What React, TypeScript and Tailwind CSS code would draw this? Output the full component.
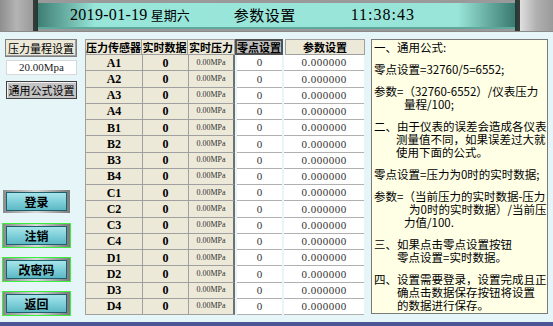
const sensors = ['A1', 'A2', 'A3', 'A4', 'B1', 'B2', 'B3', 'B4', 'C1', 'C2', 'C3', 'C4', 'D1', 'D2', 'D3', 'D4']

const serif = "font-['Liberation_Serif','Noto_Sans_CJK_SC',serif]"
const cjk = "font-['Noto_Sans_CJK_SC','Liberation_Sans',sans-serif]"

function SideButton({ label, outline }: { label: string; outline?: boolean }) {
  return (
    <div className={`w-[69px] h-[25px] p-px ${outline ? 'bg-[#3cf03c]' : 'bg-transparent'}`}>
      <div className="w-full h-full bg-gradient-to-r from-[#8c8c8c] via-[#d8d8d8] to-[#7a7a7a] flex items-center justify-center px-[3px] py-[2px]">
        <div className="w-full h-full border border-[#1e5f6e] bg-gradient-to-b from-[#a8e4ea] via-[#7fd0da] to-[#5cb8c4] flex items-center justify-center">
          <span className={`${cjk} text-[12px] font-bold text-black leading-none`}>{label}</span>
        </div>
      </div>
    </div>
  )
}

function Para({ lines, first }: { lines: [string, number][]; first?: boolean }) {
  return (
    <div className={first ? '' : 'mt-[9px]'}>
      {lines.map(([t, indent], i) => (
        <div key={i} className="h-[13px] leading-[13px] whitespace-nowrap" style={{ paddingLeft: indent }}>
          {t}
        </div>
      ))}
    </div>
  )
}

export default function App() {
  return (
    <div className="w-[553px] h-[326px] bg-[#e6f6f8] flex flex-col overflow-hidden">
      {/* header bar */}
      <div className="h-[32px] flex bg-[#9a9a9a] border-b border-[#8a8a8a]">
        <div className="w-[33px] bg-gradient-to-r from-[#8e8e8e] via-[#b4b4b4] to-[#9a9a9a]" />
        <div className="w-[5px] bg-gradient-to-r from-[#3a3a3a] to-[#1e3a34]" />
        <div className="flex-1 flex flex-col pt-[3px] pb-[2px] bg-[#9a9a9a]">
          <div className="flex-1 flex items-center bg-gradient-to-r from-[#3f7f74] via-[#98e6da] via-[12%] to-[#9ae4d8] border-b-2 border-[#5fa89c]">
            <div className="flex-1 flex items-center bg-gradient-to-r from-transparent via-transparent via-[88%] to-[#3a7a70]">
              <span className={`${serif} text-[16px] text-black ml-[32px] tracking-[0.3px]`}>2019-01-19</span>
              <span className={`${cjk} text-[13px] text-black ml-[3px]`}>星期六</span>
              <span className={`${cjk} text-[15px] text-black ml-[44px] tracking-[0.5px]`}>参数设置</span>
              <span className={`${serif} text-[16px] text-black ml-[55px] tracking-[1px]`}>11:38:43</span>
            </div>
          </div>
        </div>
        <div className="w-[5px] bg-gradient-to-r from-[#1e3a34] to-[#3a3a3a]" />
        <div className="w-[33px] bg-gradient-to-r from-[#e0e0e0] via-[#b0b0b0] to-[#9a9a9a]" />
      </div>

      <div className="flex-1 flex">
        {/* left column */}
        <div className="w-[84px] flex flex-col pl-[5px] pt-[7px]">
          <div className={`w-[72px] h-[18px] bg-[#ece9d8] border border-[#808080] shadow-[inset_-1px_-1px_0_#a0a0a0] flex items-center justify-center whitespace-nowrap ${cjk} text-[11px] text-black`}>
            压力量程设置
          </div>
          <div className={`w-[71px] h-[15px] mt-[3px] ml-px bg-white border border-[#d8d8d8] flex items-center justify-center ${serif} text-[11px] text-[#222]`}>
            20.00Mpa
          </div>
          <div className={`w-[71px] h-[18px] mt-[6px] ml-px bg-[#c4c4c4] border border-[#404040] shadow-[inset_1px_1px_0_#f0f0f0] flex items-center justify-center whitespace-nowrap ${cjk} text-[11px] text-black`}>
            通用公式设置
          </div>
          <div className="flex-1" />
          <div className="flex flex-col gap-[9px] -ml-[3px] mb-[6px]">
            <SideButton label="登录" />
            <SideButton label="注销" outline />
            <SideButton label="改密码" outline />
            <SideButton label="返回" outline />
          </div>
        </div>

        {/* table */}
        <div className="w-[281px] pt-[7px] ml-px">
          <div className={`flex h-[16px] ${cjk} text-[11px] font-bold text-black whitespace-nowrap`}>
            <div className="w-[57px] bg-[#ece9d8] border border-[#a0a0a0] flex items-center justify-center">压力传感器</div>
            <div className="w-[46px] bg-[#ece9d8] border-y border-r border-[#a0a0a0] flex items-center justify-center">实时数据</div>
            <div className="w-[47px] bg-[#ece9d8] border-y border-r border-[#a0a0a0] flex items-center justify-center">实时压力</div>
            <div className="w-[48px] bg-[#c0c0c0] border-2 border-[#505050] flex items-center justify-center">零点设置</div>
            <div className="w-[80px] ml-[2px] bg-[#ece9d8] border border-[#a0a0a0] flex items-center justify-center">参数设置</div>
          </div>
          {sensors.map((s) => (
            <div key={s} className="flex h-[16.25px]">
              <div className={`w-[57px] bg-[#ece9d8] border-l border-b border-[#a0a0a0] flex items-center justify-center ${serif} text-[12px] font-bold`}>{s}</div>
              <div className={`w-[46px] bg-[#ece9d8] border-l border-b border-[#a0a0a0] flex items-center justify-center ${serif} text-[12px] font-bold`}>0</div>
              <div className={`w-[47px] bg-[#ece9d8] border-l border-b border-r-2 border-[#a0a0a0] border-r-[#707070] flex items-center justify-center ${serif} text-[8px] text-[#333]`}>0.00MPa</div>
              <div className={`w-[45px] ml-[2px] bg-white border-b border-[#b0b0b0] flex items-center justify-center ${serif} text-[11px] text-[#333]`}>0</div>
              <div className={`w-[80px] ml-[2px] bg-white border-b border-[#b0b0b0] flex items-center justify-center ${serif} text-[11px] text-[#333] tracking-[0.5px]`}>0.000000</div>
            </div>
          ))}
        </div>

        {/* formula panel */}
        <div className="w-[177px] ml-[5px] mt-[7px] mb-[8px] bg-[#ffffe6] border border-[#7a7a7a] pl-[2px] pt-[1px] overflow-hidden">
          <div className={`${cjk} text-[11.5px] text-black`}>
            <Para first lines={[['一、通用公式:', 0]]} />
            <Para lines={[['零点设置=32760/5=6552;', 0]]} />
            <Para lines={[['参数=（32760-6552）/仪表压力', 0], ['量程/100;', 30]]} />
            <Para lines={[['二、由于仪表的误差会造成各仪表', 0], ['测量值不同，如果误差过大就', 22], ['使用下面的公式。', 22]]} />
            <Para lines={[['零点设置=压力为0时的实时数据;', 0]]} />
            <Para lines={[['参数=（当前压力的实时数据-压力', 0], ['为0时的实时数据）/当前压', 35], ['力值/100.', 30]]} />
            <Para lines={[['三、如果点击零点设置按钮', 0], ['零点设置=实时数据。', 23]]} />
            <Para lines={[['四、设置需要登录，设置完成且正', 0], ['确点击数据保存按钮将设置', 23], ['的数据进行保存。', 23]]} />
          </div>
        </div>
      </div>

      <div className="h-[4px] bg-[#4c5596]" />
    </div>
  )
}
